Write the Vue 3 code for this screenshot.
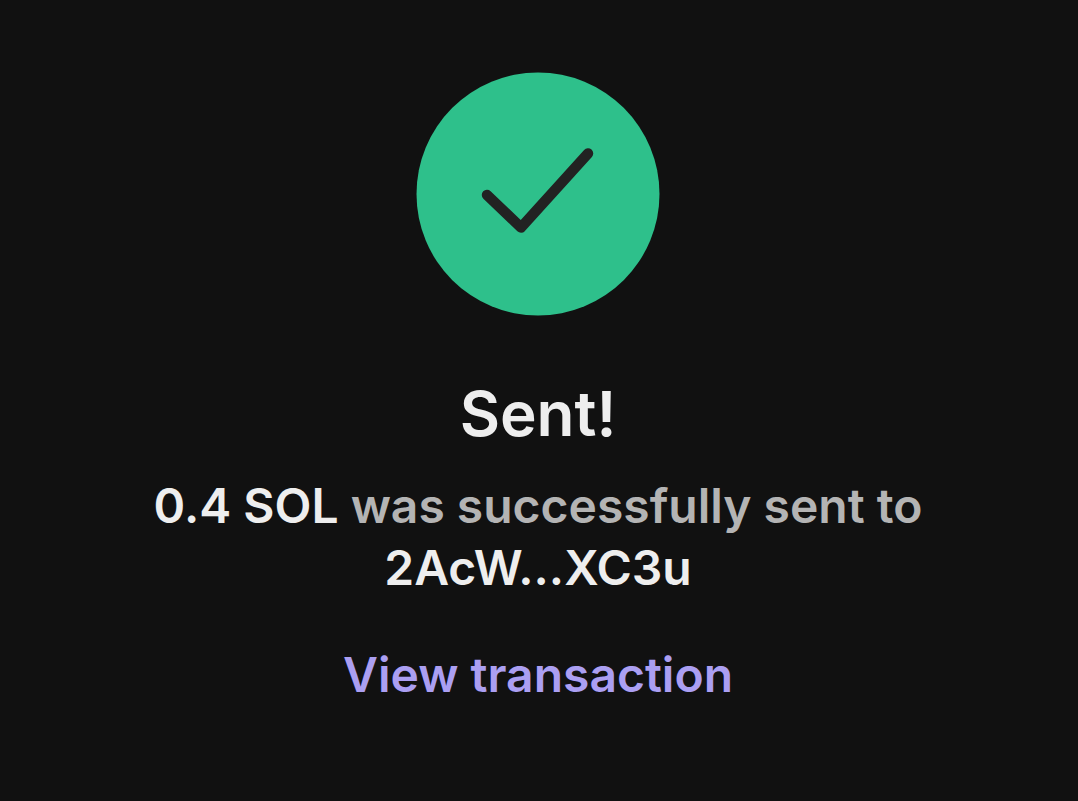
<script setup>
const transfer = { amount: '0.4 SOL', recipient: '2AcW...XC3u' }
</script>

<template>
  <main class="receipt">
    <svg class="badge" viewBox="0 0 244 244" aria-hidden="true">
      <circle cx="122" cy="122" r="121.5" fill="#2ec08b" />
      <path d="M71 123L105 155.500L172 81.500" fill="none" stroke="#222" stroke-width="10.500" stroke-linecap="round" stroke-linejoin="round" />
    </svg>
    <h1 class="title">Sent!</h1>
    <p class="summary">
      <strong>{{ transfer.amount }}</strong> was successfully sent to
      <strong class="recipient">{{ transfer.recipient }}</strong>
    </p>
    <a class="link" href="#transaction">View transaction</a>
  </main>
</template>

<style>
body {
  background: #111;
}
</style>

<style scoped>
.receipt {
  display: flex;
  flex-direction: column;
  align-items: center;
  padding: 72px 26px 72px 24px;
  font-family: Inter, "Liberation Sans", sans-serif;
  font-weight: 600;
  text-align: center;
}
.badge {
  width: 244px;
  height: 244px;
}
.title {
  margin: 60px 0 0;
  font-size: 62px;
  line-height: 76px;
  font-weight: 600;
  color: #eee;
}
.summary {
  margin: 23px 0 0;
  font-size: 48px;
  line-height: 62px;
  color: #b4b4b4;
}
.summary strong {
  font-weight: 600;
  color: #eee;
}
.summary .recipient {
  display: block;
}
.link {
  margin-top: 45px;
  font-size: 48px;
  line-height: 62px;
  color: #ab9ff2;
  text-decoration: none;
}
</style>
